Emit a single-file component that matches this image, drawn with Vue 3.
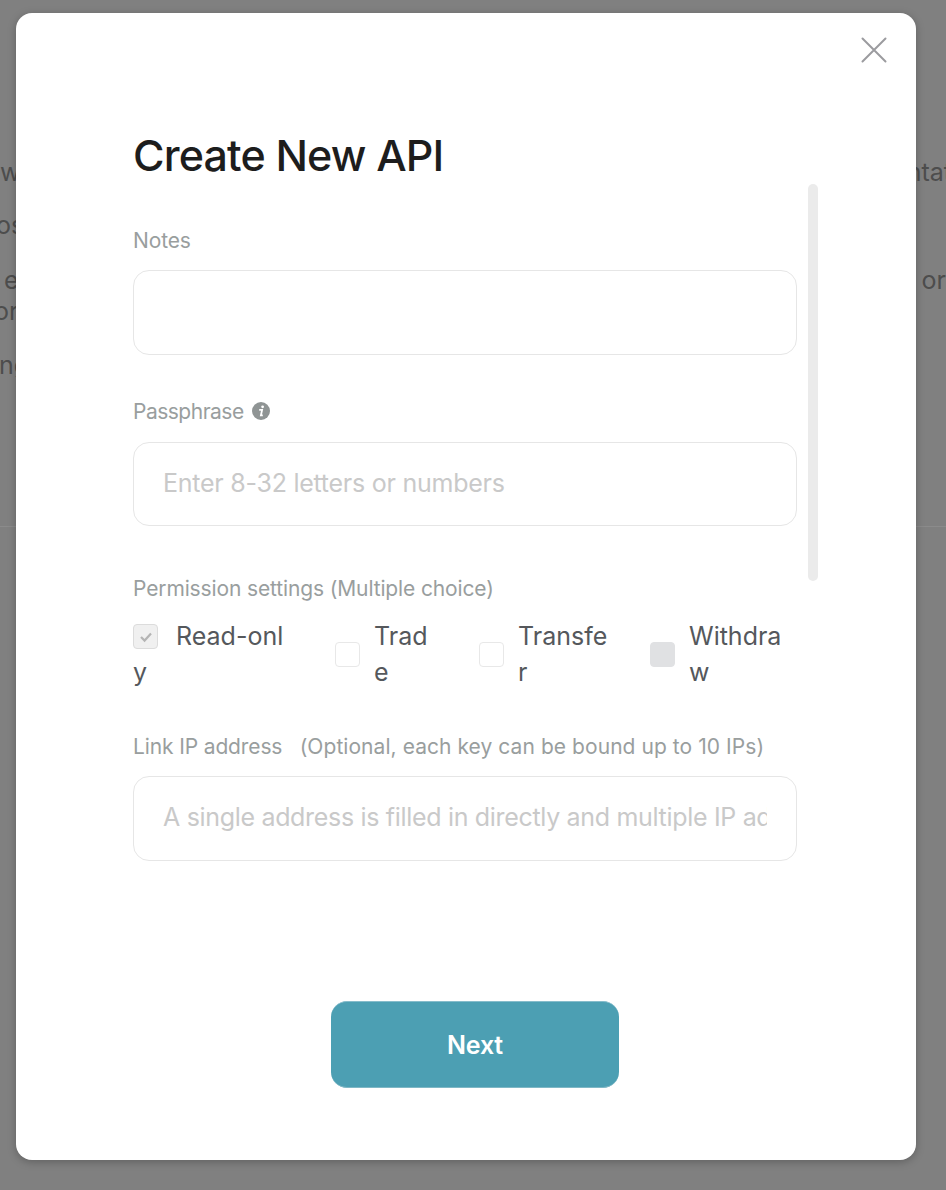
<script setup>
const behind = [
  { left: 'w', right: 'ntat', top: 155, shift: 0, rightShift: -6 },
  { left: 'os', right: '', top: 19, shift: -4, rightShift: 0 },
  { left: 'e', right: 'or', top: 21, shift: 4, rightShift: 0 },
  { left: 'or', right: '', top: -3, shift: -6, rightShift: 0 },
  { left: 'ng', right: '', top: 20, shift: -1, rightShift: 0 },
]

const permissions = [
  { name: 'Trade', width: 144, labelWidth: 56, box: 'empty' },
  { name: 'Transfer', width: 171, labelWidth: 90, box: 'empty' },
  { name: 'Withdraw', width: 147, labelWidth: 98, box: 'grey' },
]
</script>

<template>
  <div class="page">
    <!-- page behind the dialog, only its edges show -->
    <div class="behind">
      <div v-for="line in behind" :key="line.top" class="behind-line" :style="{ marginTop: line.top + 'px' }">
        <span :style="{ marginLeft: line.shift + 'px' }">{{ line.left }}</span>
        <span :style="{ marginRight: line.rightShift + 'px' }">{{ line.right }}</span>
      </div>
      <div class="behind-rule"></div>
    </div>

    <div class="dialog">
      <button class="close-btn" aria-label="Close">
        <svg width="26" height="26" viewBox="0 0 26 26">
          <path d="M1.5 1.5 24.5 24.5M24.5 1.5 1.5 24.5" fill="none" stroke="#9b9b9f" stroke-width="2" stroke-linecap="round" />
        </svg>
      </button>

      <h1 class="title">Create New API</h1>

      <div class="scroll-area">
        <form class="form" @submit.prevent>
          <label class="label">Notes</label>
          <input class="input" type="text" />

          <label class="label gap-top">
            <span class="pass-text">Passphrase</span>
            <svg class="info" width="18" height="18" viewBox="0 0 18 18">
              <circle cx="9" cy="9" r="9" fill="#8f9494" />
              <circle cx="10.6" cy="4.8" r="1.4" fill="#fff" />
              <path d="M7.2 7.9h2.9L8.9 13.4h1.9" fill="none" stroke="#fff" stroke-width="1.8" />
            </svg>
          </label>
          <input class="input input-pass" type="text" placeholder="Enter 8-32 letters or numbers" />

          <label class="label perm-label">Permission settings (Multiple choice)</label>
          <div class="perms">
            <div class="perm-first">
              <span class="box box-checked">
                <svg width="14" height="12" viewBox="0 0 14 12">
                  <path d="M2 6l3.6 3.6L12 2.6" fill="none" stroke="#b4b4b4" stroke-width="2.2" />
                </svg>
              </span>Read-only
            </div>
            <div v-for="perm in permissions" :key="perm.name" class="perm" :style="{ width: perm.width + 'px' }">
              <span class="box" :class="'box-' + perm.box"></span>
              <span class="perm-name" :style="{ width: perm.labelWidth + 'px' }">{{ perm.name }}</span>
            </div>
          </div>

          <label class="label gap-top">
            <span>Link IP address&nbsp;&nbsp; <span class="optional">(Optional, each key can be bound up to 10 IPs)</span></span>
          </label>
          <input class="input input-ip" type="text" placeholder="A single address is filled in directly and multiple IP addresses are separated by commas" />
        </form>
        <div class="scrollbar"></div>
      </div>

      <button class="next-btn">Next</button>
    </div>
  </div>
</template>

<style>
html,
body {
  margin: 0;
  background: #808080;
}
</style>

<style scoped>
.page {
  position: relative;
  height: 1190px;
  overflow: hidden;
  background: #808080;
  font-family: Inter, "Noto Sans", sans-serif;
}

/* Background page */
.behind {
  color: #4d4d4d;
  font-size: 25px;
  line-height: 34px;
}

.behind-line {
  display: flex;
  justify-content: space-between;
}

.behind-rule {
  margin-top: 144px;
  height: 1px;
  background: #8b8b8b;
}

/* Dialog */
.dialog {
  position: absolute;
  top: 13px;
  left: 16px;
  box-sizing: border-box;
  width: 900px;
  height: 1147px;
  padding: 114px 0 0 117px;
  background: #fff;
  border-radius: 16px;
  box-shadow: 0 2px 8px rgba(0, 0, 0, 0.25);
}

.close-btn {
  position: absolute;
  top: 24px;
  right: 29px;
  padding: 0;
  border: none;
  background: none;
  line-height: 0;
}

.title {
  margin: 0;
  color: #1d1d1d;
  font-size: 43px;
  font-weight: 500;
  line-height: 56px;
  letter-spacing: -0.85px;
}

.scroll-area {
  display: flex;
  align-items: flex-start;
  gap: 11px;
  margin-top: 1px;
}

.form {
  display: flex;
  flex-direction: column;
  width: 664px;
  padding-top: 42px;
}

.scrollbar {
  width: 10px;
  height: 397px;
  border-radius: 5px;
  background: #ebebeb;
}

.label {
  display: flex;
  align-items: center;
  gap: 8px;
  padding-top: 2px;
  color: #999e9e;
  font-size: 21px;
  line-height: 26px;
  letter-spacing: -0.13px;
}

.pass-text {
  letter-spacing: -0.5px;
}

.optional {
  letter-spacing: 0.06px;
}

.info {
  margin-top: -2px;
}

.gap-top {
  margin-top: 42px;
}

.perm-label {
  margin-top: 48px;
}

.input {
  box-sizing: border-box;
  width: 100%;
  height: 85px;
  margin-top: 16px;
  padding: 0 29px 2px;
  border: 1px solid #e6e6e6;
  border-radius: 16px;
  outline: none;
  background: #fff;
  font-family: inherit;
  font-size: 25px;
  letter-spacing: -0.25px;
}

.input-pass {
  height: 84px;
  margin-top: 17px;
}

.input-ip {
  padding-bottom: 4px;
  letter-spacing: -0.32px;
}

.input::placeholder {
  color: #c9c9c9;
  opacity: 1;
}

/* Permission checkboxes */
.perms {
  display: flex;
  margin-top: 16px;
  color: #55585c;
  font-size: 25px;
  line-height: 36px;
}

.perm-first {
  width: 160px;
  margin-right: 42px;
  word-break: break-all;
}

.perm {
  display: flex;
  flex: none;
  align-items: center;
  gap: 14px;
}

.perm-name {
  word-break: break-all;
}

.box {
  display: inline-flex;
  flex: none;
  align-items: center;
  justify-content: center;
  box-sizing: border-box;
  width: 25px;
  height: 25px;
  border: 1px solid #e8e8e8;
  border-radius: 4px;
}

.box-checked {
  margin: 6px 18px 0 0;
  background: #f0f0f0;
  border-color: #dcdcdc;
  vertical-align: top;
}

.box-grey {
  background: #e0e1e3;
  border-color: #e0e1e3;
}

.next-btn {
  display: block;
  box-sizing: border-box;
  width: 288px;
  height: 87px;
  margin: 140px 0 0 198px;
  border: none;
  border-top: 1px solid #86bccb;
  border-bottom: 1px solid #7fb7c5;
  border-radius: 16px;
  background: #4c9fb3;
  color: #fff;
  font-family: inherit;
  font-size: 25px;
  font-weight: 600;
  letter-spacing: -0.2px;
}
</style>
